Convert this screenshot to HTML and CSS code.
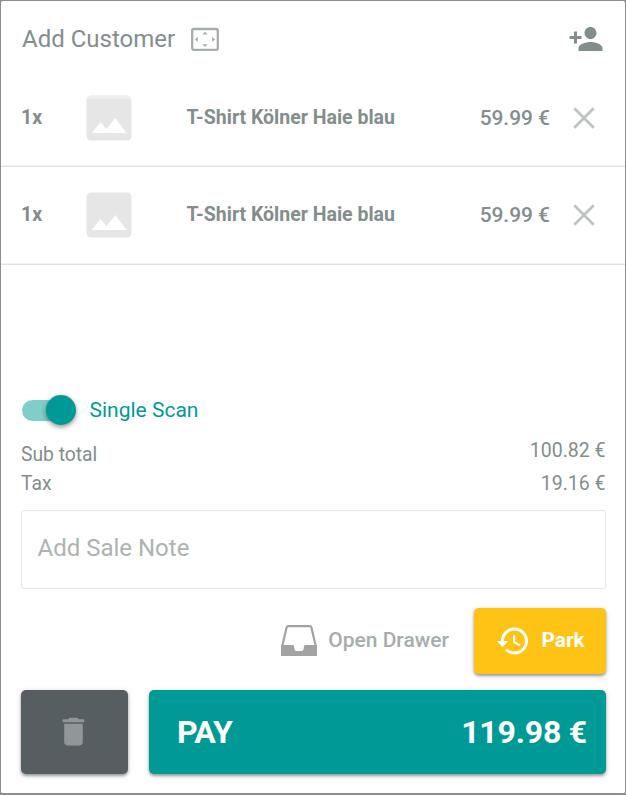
FILE: index.html
```html
<!DOCTYPE html>
<html lang="en">
<head>
<meta charset="utf-8">
<title>Cart</title>
<link rel="stylesheet" href="styles.css">
</head>
<body>
<main class="cart">
  <header class="customer">
    <span class="customer-label">Add Customer</span>
    <svg class="scan-icon" viewBox="0 0 28 24"><rect x="1.2" y="2" width="25.6" height="20.8" rx="1.5" fill="none" stroke="#a6adac" stroke-width="2.3"/><path d="M11.4 7.6L14 4.7l2.6 2.9zM11.4 17.2L14 20.1l2.6-2.9zM6.8 9.8v5.2L4 12.4zM21.2 9.8v5.2l2.8-2.6z" fill="#a6adac"/></svg>
    <svg class="person-icon" viewBox="0 0 24 24"><path fill="#848d8d" d="M15 12c2.21 0 4-1.79 4-4s-1.79-4-4-4-4 1.79-4 4 1.79 4 4 4zm-9-2V7H4v3H1v2h3v3h2v-3h3v-2H6zm9 4c-2.67 0-8 1.34-8 4v2h16v-2c0-2.66-5.33-4-8-4z"/></svg>
  </header>
  <section class="items">
    <div class="item">
      <span class="qty">1x</span>
      <svg class="thumb" viewBox="0 0 46 46"><rect x=".5" y=".5" width="45" height="45" rx="4.5" fill="#e6e6e6"/><path d="M.5 4V5A4.5 4.5 0 0 1 5 .5H41A4.5 4.5 0 0 1 45.5 5V3.5H.5z" fill="#f0f0f0"/><path d="M5.7 38l8.7-11 6 7 9-11 11 15z" fill="#fff"/></svg>
      <span class="name">T-Shirt Kölner Haie blau</span>
      <span class="price">59.99 €</span>
      <svg class="remove" viewBox="0 0 22 22"><path d="M1.3 1.3l19.4 19.4M20.7 1.3L1.3 20.7" stroke="#bfc2c2" stroke-width="2.7"/></svg>
    </div>
    <div class="item">
      <span class="qty">1x</span>
      <svg class="thumb" viewBox="0 0 46 46"><rect x=".5" y=".5" width="45" height="45" rx="4.5" fill="#e6e6e6"/><path d="M5.7 38l8.7-11 6 7 9-11 11 15z" fill="#fff"/></svg>
      <span class="name">T-Shirt Kölner Haie blau</span>
      <span class="price">59.99 €</span>
      <svg class="remove" viewBox="0 0 22 22"><path d="M1.3 1.3l19.4 19.4M20.7 1.3L1.3 20.7" stroke="#bfc2c2" stroke-width="2.7"/></svg>
    </div>
  </section>
  <section class="summary">
    <div class="scan"><span class="track"><span class="knob"></span></span><span class="scan-label">Single Scan</span></div>
    <div class="totals">
      <div class="labels"><span>Sub total</span><span>Tax</span></div>
      <div class="amounts"><span>100.82 €</span><span>19.16 €</span></div>
    </div>
    <div class="note"><span>Add Sale Note</span></div>
    <div class="actions">
      <svg class="tray" viewBox="0 0 36 31"><path d="M1.3 21L5.6 2.6Q5.9 1.2 7.4 1.2h21.2q1.5 0 1.8 1.4L34.7 21" fill="none" stroke="#a3a3a3" stroke-width="2.2"/><path d="M0 20h11.5q1.3 0 1.5 1.3l.5 3q.3 1.6 1.8 1.6h5.4q1.5 0 1.8-1.6l.5-3q.2-1.3 1.5-1.3H36v11H0z" fill="#a3a3a3"/></svg>
      <span class="drawer">Open Drawer</span>
      <div class="park"><svg class="history" viewBox="0 0 24 24"><path fill="#fff" d="M13 3c-4.97 0-9 4.03-9 9H1l3.89 3.89.07.14L9 12H6c0-3.87 3.13-7 7-7s7 3.13 7 7-3.13 7-7 7c-1.93 0-3.68-.79-4.94-2.06l-1.42 1.42C8.27 19.99 10.51 21 13 21c4.97 0 9-4.03 9-9s-4.03-9-9-9zm-1 5v5l4.28 2.54.72-1.21-3.5-2.08V8H12z"/></svg><span>Park</span></div>
    </div>
    <div class="checkout">
      <div class="trash"><svg viewBox="0 0 24 24"><path fill="#919699" d="M6 19c0 1.1.9 2 2 2h8c1.1 0 2-.9 2-2V7H6v12zM19 4h-3.5l-1-1h-5l-1 1H5v2h14V4z"/></svg></div>
      <div class="pay"><span class="pay-label">PAY</span><span class="sum">119.98 €</span></div>
    </div>
  </section>
</main>
</body>
</html>
```
FILE: styles.css
```css
* { box-sizing: border-box; }
body { margin: 0; background: #8e8e8e; font-family: Roboto, "Liberation Sans", sans-serif; color: #848d8d; font-size: 19.5px; }
svg { display: block; flex: none; }
span { white-space: nowrap; }
.cart { width: 626px; height: 795px; border: 1px solid #8e8e8e; border-bottom-width: 2px; border-radius: 3px; background: #fff; display: flex; flex-direction: column; }
.customer { height: 68px; padding: 8px 21px 0; display: flex; align-items: center; }
.customer-label { font-size: 24px; width: 169px; }
.scan-icon { width: 28px; height: 24px; }
.person-icon { width: 36px; height: 36px; margin-left: auto; }
.item { height: 98px; border-bottom: 1px solid #e0e2e2; box-shadow: inset 0 -1px #f1f2f2; padding-left: 20px; display: flex; align-items: center; }
.item:first-child { padding-top: 1px; }
.item:last-child { padding-bottom: 1px; }
.qty { width: 65px; font-weight: 700; padding-bottom: 2px; }
.thumb { width: 46px; height: 46px; margin-right: 54.5px; }
.name { font-weight: 700; flex: 1; padding-bottom: 2px; }
.price { font-weight: 500; font-size: 20.9px; }
.remove { width: 22px; height: 22px; margin: 0 30px 0 23px; }
.summary { margin-top: auto; padding: 0 19px 19px 20px; }
.scan { height: 30px; display: flex; align-items: center; color: #009a96; }
.scan-label { font-size: 21px; }
.track { width: 54px; height: 21px; border-radius: 11px; background: linear-gradient(90deg, #80ceca 40px, transparent 40px); margin: 0 13.5px 0 1px; display: flex; align-items: center; justify-content: flex-end; }
.knob { width: 30px; height: 30px; flex: none; border-radius: 50%; background: #009a96; box-shadow: 0 2px 5px rgba(0,0,0,.45); }
.totals { display: flex; justify-content: space-between; height: 60px; margin-top: 10px; }
.labels, .amounts { display: flex; flex-direction: column; }
.labels { padding-top: 5px; line-height: 29px; font-size: 19.3px; }
.amounts { margin-top: -1px; line-height: 33px; text-align: right; padding-right: .5px; }
.note { height: 79px; margin-top: 15px; border: 1px solid #e5e7e7; border-radius: 3px; padding: 0 15.5px 4px; display: flex; align-items: center; color: #adb3b3; font-size: 24px; }
.actions { display: flex; align-items: center; justify-content: flex-end; height: 66px; margin-top: 19px; }
.tray { width: 36px; height: 31px; margin: 0 11px 1px 0; }
.drawer { color: #a6adac; font-weight: 500; font-size: 21px; margin: 0 25px 3px 0; }
.park, .trash, .pay { border-radius: 5px; box-shadow: 0 2px 3px rgba(0,0,0,.35), 0 1px 6px rgba(0,0,0,.12); display: flex; align-items: center; }
.park { width: 132px; height: 66px; background: #ffc316; color: #fff; font-weight: 700; font-size: 20.8px; padding-left: 21px; }
.park span { padding-bottom: 3px; }
.history { width: 36px; height: 36px; margin-right: 10.5px; }
.checkout { display: flex; gap: 21px; height: 84px; margin-top: 16px; }
.trash { width: 107px; background: #565e61; justify-content: center; padding: 0 2px 1px 0; }
.trash svg { width: 37px; height: 37px; }
.pay { flex: 1; background: #009a96; color: #fff; font-size: 32px; font-weight: 700; justify-content: space-between; padding: 0 19px 0 28px; }
.pay-label { letter-spacing: -.7px; }
.sum { letter-spacing: -.2px; }
```
